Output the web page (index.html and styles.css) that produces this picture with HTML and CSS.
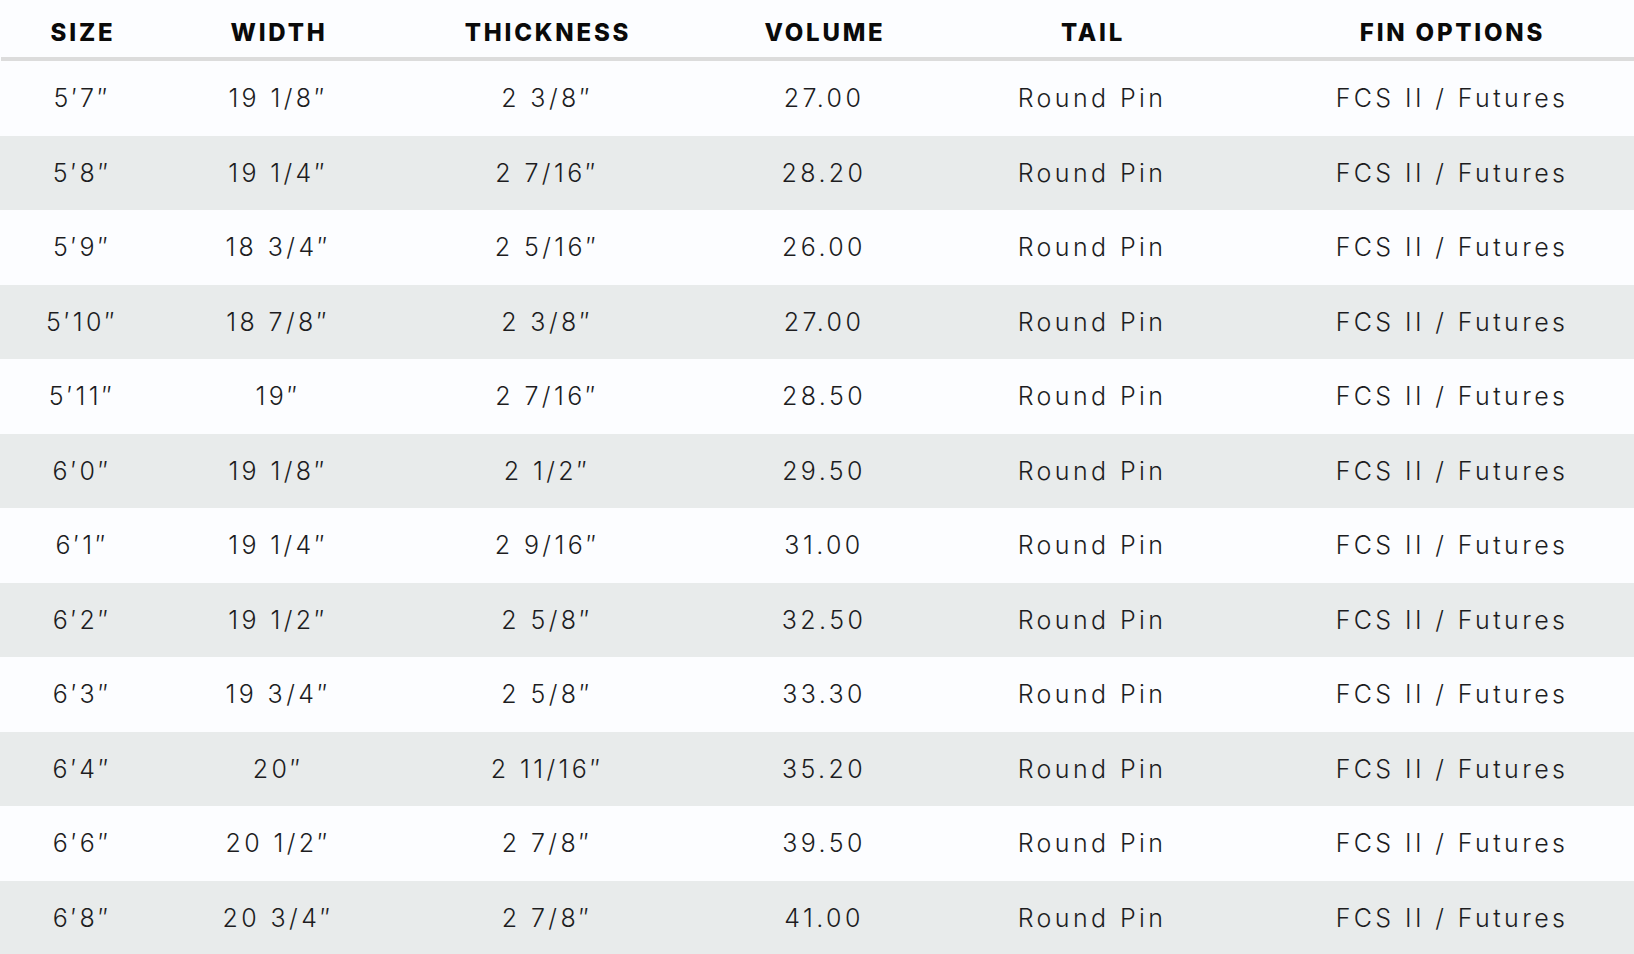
FILE: index.html
```html
<!DOCTYPE html>
<html lang="en">
<head>
<meta charset="utf-8">
<title>Size chart</title>
<link rel="stylesheet" href="styles.css">
</head>
<body>
<div class="chart">
  <div class="row head">
    <div class="cell">SIZE</div>
    <div class="cell">WIDTH</div>
    <div class="cell">THICKNESS</div>
    <div class="cell">VOLUME</div>
    <div class="cell">TAIL</div>
    <div class="cell last">FIN OPTIONS</div>
  </div>
  <div class="row"><div class="cell">5′7″</div><div class="cell">19 1/8″</div><div class="cell">2 3/8″</div><div class="cell">27.00</div><div class="cell">Round Pin</div><div class="cell last">FCS II / Futures</div></div>
  <div class="row alt"><div class="cell">5′8″</div><div class="cell">19 1/4″</div><div class="cell">2 7/16″</div><div class="cell">28.20</div><div class="cell">Round Pin</div><div class="cell last">FCS II / Futures</div></div>
  <div class="row"><div class="cell">5′9″</div><div class="cell">18 3/4″</div><div class="cell">2 5/16″</div><div class="cell">26.00</div><div class="cell">Round Pin</div><div class="cell last">FCS II / Futures</div></div>
  <div class="row alt"><div class="cell">5′10″</div><div class="cell">18 7/8″</div><div class="cell">2 3/8″</div><div class="cell">27.00</div><div class="cell">Round Pin</div><div class="cell last">FCS II / Futures</div></div>
  <div class="row"><div class="cell">5′11″</div><div class="cell">19″</div><div class="cell">2 7/16″</div><div class="cell">28.50</div><div class="cell">Round Pin</div><div class="cell last">FCS II / Futures</div></div>
  <div class="row alt"><div class="cell">6′0″</div><div class="cell">19 1/8″</div><div class="cell">2 1/2″</div><div class="cell">29.50</div><div class="cell">Round Pin</div><div class="cell last">FCS II / Futures</div></div>
  <div class="row"><div class="cell">6′1″</div><div class="cell">19 1/4″</div><div class="cell">2 9/16″</div><div class="cell">31.00</div><div class="cell">Round Pin</div><div class="cell last">FCS II / Futures</div></div>
  <div class="row alt"><div class="cell">6′2″</div><div class="cell">19 1/2″</div><div class="cell">2 5/8″</div><div class="cell">32.50</div><div class="cell">Round Pin</div><div class="cell last">FCS II / Futures</div></div>
  <div class="row"><div class="cell">6′3″</div><div class="cell">19 3/4″</div><div class="cell">2 5/8″</div><div class="cell">33.30</div><div class="cell">Round Pin</div><div class="cell last">FCS II / Futures</div></div>
  <div class="row alt"><div class="cell">6′4″</div><div class="cell">20″</div><div class="cell">2 11/16″</div><div class="cell">35.20</div><div class="cell">Round Pin</div><div class="cell last">FCS II / Futures</div></div>
  <div class="row"><div class="cell">6′6″</div><div class="cell">20 1/2″</div><div class="cell">2 7/8″</div><div class="cell">39.50</div><div class="cell">Round Pin</div><div class="cell last">FCS II / Futures</div></div>
  <div class="row alt"><div class="cell">6′8″</div><div class="cell">20 3/4″</div><div class="cell">2 7/8″</div><div class="cell">41.00</div><div class="cell">Round Pin</div><div class="cell last">FCS II / Futures</div></div>
</div>
</body>
</html>
```
FILE: styles.css
```css
html, body {
  margin: 0;
  padding: 0;
  background: #fcfdff;
  overflow: hidden;
}
.chart {
  display: flex;
  flex-direction: column;
  font-family: Inter, "Liberation Sans", sans-serif;
  color: #1d1d1f;
}
.row {
  display: grid;
  grid-template-columns: 164px 228px 310px 244px 292px 1fr;
  height: 74.5px;
  align-items: center;
  font-size: 25px;
  font-weight: 300;
  letter-spacing: 3.4px;
}
.row.alt {
  background: #e8ebeb;
}
.row.head {
  box-sizing: border-box;
  height: 61px;
  padding-top: 8px;
  border-bottom: 4px solid #dcdcdc;
  margin-left: 1px;
  font-size: 24px;
  font-weight: 800;
  letter-spacing: 2.8px;
  color: #0a0a0a;
}
.cell {
  text-align: center;
  white-space: nowrap;
}
.cell.last {
  padding-left: 32px;
}
```
